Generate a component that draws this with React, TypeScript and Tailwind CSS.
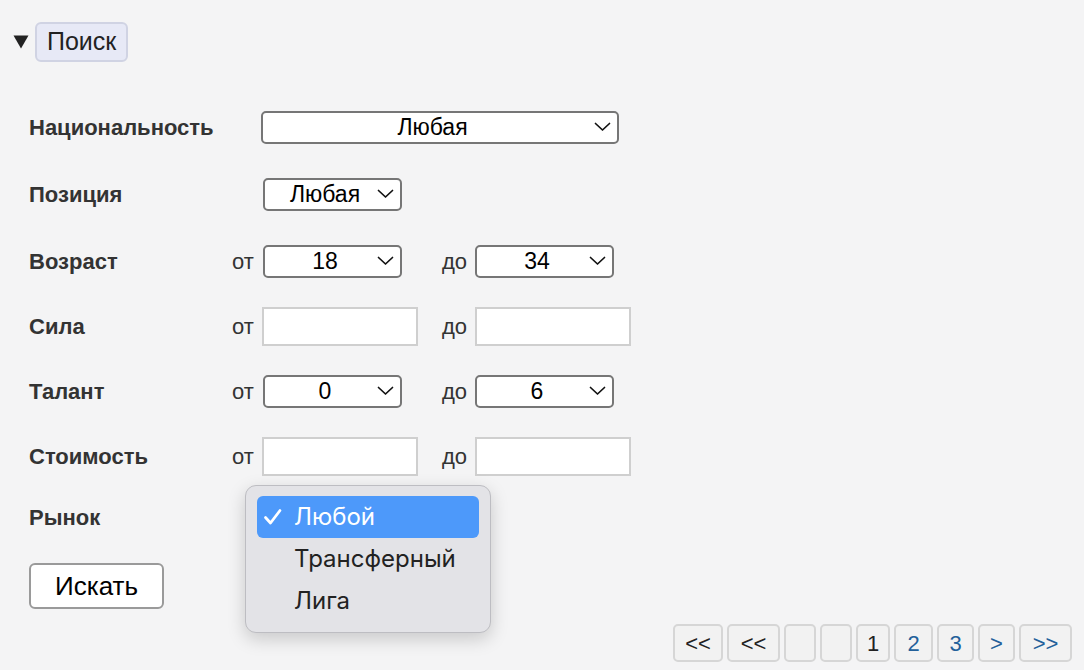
import { ReactNode } from "react";

const font = "font-['Liberation_Sans','Helvetica',Arial,sans-serif]";

function Chevron() {
  return (
    <svg width="17" height="10" viewBox="0 0 17 10" className="shrink-0">
      <path d="M1.5 1.5 L8.5 8 L15.5 1.5" fill="none" stroke="#111" strokeWidth="1.7" strokeLinecap="round" strokeLinejoin="round" />
    </svg>
  );
}

function Select({ value, w }: { value: string; w: string }) {
  return (
    <div className={`${w} h-[33px] flex items-center bg-white border-2 border-[#767676] rounded-[5px] pl-2 pr-[6px]`}>
      <span className="flex-1 text-center text-[23px] text-black leading-none">{value}</span>
      <Chevron />
    </div>
  );
}

function Input() {
  return <div className="w-[156px] h-[39px] bg-white border-2 border-[#cfcfcf]" />;
}

function Row({ label, top, children }: { label: string; top: string; children?: ReactNode }) {
  return (
    <div className={`flex items-center h-[40px] ${top}`}>
      <div className="w-[203px] text-[22px] font-bold text-[#333]">{label}</div>
      {children}
    </div>
  );
}

function Range({ a, b }: { a: ReactNode; b: ReactNode }) {
  return (
    <>
      <span className="w-[30px] text-[22px] text-[#333]">от</span>
      <div className="w-[180px] flex">{a}</div>
      <span className="w-[33px] text-[22px] text-[#333]">до</span>
      {b}
    </>
  );
}

const pages = [
  { t: "<<", w: "w-[50px]", blue: false },
  { t: "<<", w: "w-[53px]", blue: false },
  { t: "", w: "w-[32px]", blue: false },
  { t: "", w: "w-[32px]", blue: false },
  { t: "1", w: "w-[34px]", blue: false },
  { t: "2", w: "w-[39px]", blue: true },
  { t: "3", w: "w-[37px]", blue: true },
  { t: ">", w: "w-[37px]", blue: true },
  { t: ">>", w: "w-[53px]", blue: true },
];

export default function App() {
  return (
    <div className={`${font} w-[1084px] h-[670px] bg-[#f4f4f5] relative overflow-hidden`}>
      {/* Summary */}
      <div className="flex items-center pt-[22px] pl-[13px]">
        <svg width="16" height="14" viewBox="0 0 16 14" className="mr-[6px]">
          <path d="M0.5 0.5 H15.5 L8 13.5 Z" fill="#222" />
        </svg>
        <div className="h-[40px] px-[10px] flex items-center bg-[#e7e9f6] border-2 border-[#d0d3e3] rounded-[6px] text-[25px] text-[#222]">
          Поиск
        </div>
      </div>

      {/* Form */}
      <div className="pl-[29px]">
        <Row label="Национальность" top="mt-[45px]">
          <div className="w-[30px]" />
          <Select value="Любая" w="w-[358px] -ml-[1px]" />
        </Row>
        <Row label="Позиция" top="mt-[27px]">
          <div className="w-[31px]" />
          <Select value="Любая" w="w-[139px]" />
        </Row>
        <Row label="Возраст" top="mt-[27px]">
          <Range a={<div className="ml-[1px]"><Select value="18" w="w-[139px]" /></div>} b={<Select value="34" w="w-[139px]" />} />
        </Row>
        <Row label="Сила" top="mt-[25px]">
          <Range a={<Input />} b={<Input />} />
        </Row>
        <Row label="Талант" top="mt-[25px]">
          <Range a={<div className="ml-[1px]"><Select value="0" w="w-[139px]" /></div>} b={<Select value="6" w="w-[139px]" />} />
        </Row>
        <Row label="Стоимость" top="mt-[25px]">
          <Range a={<Input />} b={<Input />} />
        </Row>
        <Row label="Рынок" top="mt-[21px]" />
        <button className="mt-[26px] w-[135px] h-[46px] bg-white border-2 border-[#9a9a9a] rounded-[6px] text-[26px] text-black">
          Искать
        </button>
      </div>

      {/* Open dropdown menu */}
      <div className="absolute left-[245px] top-[485px] w-[246px] h-[148px] bg-[#e3e3e7] border border-[#bdbdc2] rounded-[11px] shadow-[0_6px_18px_rgba(0,0,0,0.18)] px-[11px] pt-[10px] font-['Inter',sans-serif]">
        <div className="h-[42px] rounded-[6px] bg-[#4d99fa] flex items-center text-white text-[24px]">
          <svg width="20" height="18" viewBox="0 0 20 18" className="ml-[6px] mr-[11px]">
            <path d="M2.5 9.5 L7.5 15 L17 2.5" fill="none" stroke="#fff" strokeWidth="2.8" strokeLinecap="round" strokeLinejoin="round" />
          </svg>
          Любой
        </div>
        <div className="h-[42px] flex items-center pl-[37px] text-[24px] text-[#222]">Трансферный</div>
        <div className="h-[42px] flex items-center pl-[37px] text-[24px] text-[#222]">Лига</div>
      </div>

      {/* Pagination */}
      <div className="absolute right-[12px] top-[624px] flex gap-[4px]">
        {pages.map((p, i) => (
          <div
            key={i}
            className={`${p.w} h-[38px] flex items-center justify-center bg-[#f2f2f2] border-2 border-[#d6d6d6] rounded-[5px] text-[22px] ${p.blue ? "text-[#23609a]" : "text-[#222]"}`}
          >
            {p.t}
          </div>
        ))}
      </div>
    </div>
  );
}
